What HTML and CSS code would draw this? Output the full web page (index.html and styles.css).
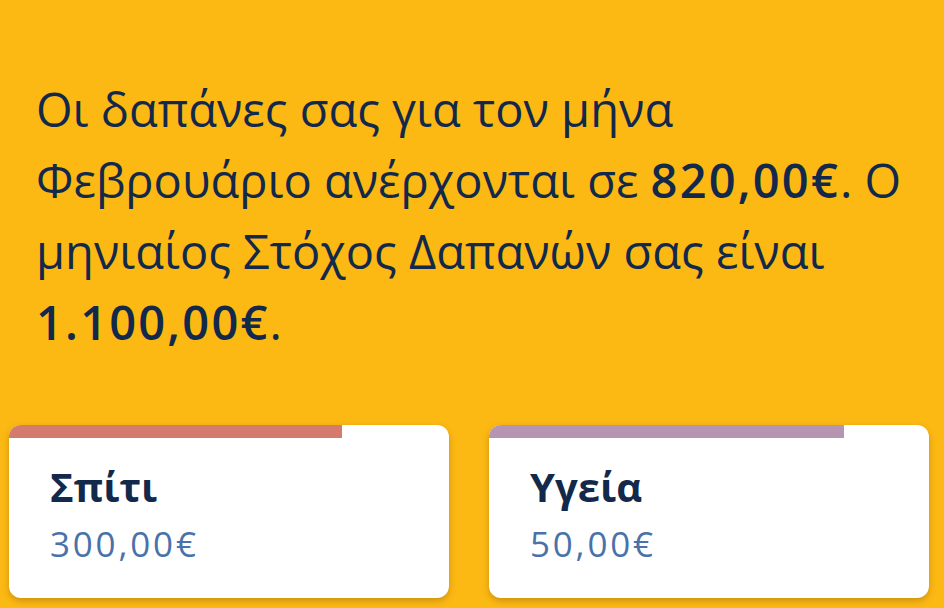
FILE: index.html
```html
<!DOCTYPE html>
<html lang="el">
<head>
<meta charset="utf-8">
<link rel="stylesheet" href="styles.css">
</head>
<body>
<main class="page">
  <p class="summary">Οι δαπάνες σας για τον μήνα Φεβρουάριο ανέρχονται σε <strong>820,00€</strong>. Ο μηνιαίος Στόχος Δαπανών σας είναι <strong>1.100,00€</strong>.</p>
  <section class="cards">
    <article class="card">
      <div class="track"><div class="fill fill-home" style="width:75.7%"></div></div>
      <div class="card-body">
        <h2 class="card-title">Σπίτι</h2>
        <div class="card-amount">300,00€</div>
      </div>
    </article>
    <article class="card">
      <div class="track"><div class="fill fill-health" style="width:80.7%"></div></div>
      <div class="card-body">
        <h2 class="card-title">Υγεία</h2>
        <div class="card-amount">50,00€</div>
      </div>
    </article>
  </section>
</main>
</body>
</html>
```

FILE: styles.css
```css
html, body {
  margin: 0;
  padding: 0;
  background: #fcb813;
  height: 100%;
  overflow: hidden;
}
body {
  font-family: "Open Sans", "Noto Sans", sans-serif;
  color: #13294b;
}
.page {
  padding-top: 74px;
}
.summary {
  margin: 0;
  padding: 0 20px 0 36px;
  font-size: 47px;
  line-height: 71px;
  font-weight: 400;
}
.summary strong {
  font-weight: 600;
  letter-spacing: 2.2px;
}
.cards {
  display: grid;
  grid-template-columns: 440px 440px;
  column-gap: 40px;
  padding-left: 9px;
  margin-top: 67px;
}
.card {
  background: #fff;
  border-radius: 12px;
  overflow: hidden;
  box-shadow: 0 3px 6px rgba(120, 80, 0, 0.35);
  height: 173px;
}
.track {
  height: 13px;
}
.fill {
  height: 100%;
}
.fill-home { background: #d47b6e; }
.fill-health { background: #b695b2; }
.card-body {
  padding: 22px 41px 0 41px;
}
.card-title {
  margin: 0;
  font-size: 40px;
  line-height: 54px;
  font-weight: 700;
  color: #13294b;
}
.card-amount {
  margin-top: 6px;
  font-size: 35px;
  line-height: 48px;
  letter-spacing: 2.8px;
  color: #4a72a8;
}
```
